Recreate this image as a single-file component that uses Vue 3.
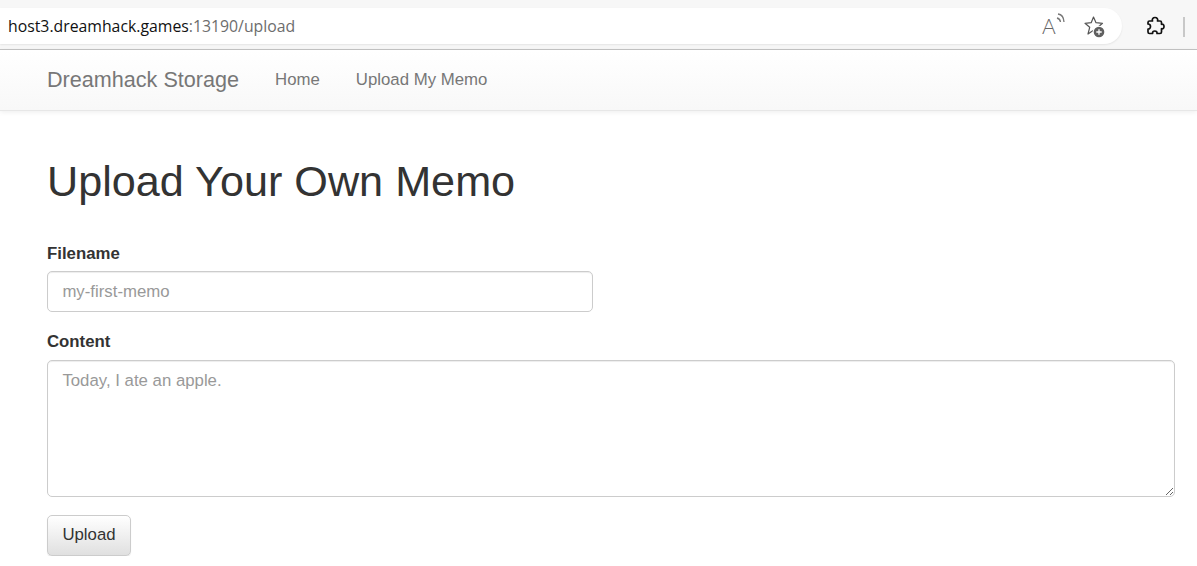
<script setup>
const links = ['Home', 'Upload My Memo']
</script>

<template>
  <div class="browser">
    <div class="urlbar">
      <div class="url"><span class="host">host3.dreamhack.games</span>:13190/upload</div>
      <div class="url-icons">
        <div class="read">
          <span class="read-a">A</span>
          <svg class="waves" width="10" height="12" viewBox="0 0 10 12" fill="none" stroke="#777" stroke-width="1.300">
            <path d="M1 5C3 5.500 4.200 7 4.500 9" />
            <path d="M2 1C5.500 1.500 7.800 4.500 8 9" />
          </svg>
        </div>
        <svg width="24" height="24" viewBox="0 0 24 24" fill="none">
          <path d="M10.500 3L13 8.700L19.500 9.300L14.900 13.300L16.300 19.300L10.500 16.200L5 20L6.700 13.300L2 9.300L8.200 8.700Z" stroke="#555" stroke-width="1.200" stroke-linejoin="round" />
          <circle cx="16" cy="18" r="6.300" fill="#fff" />
          <circle cx="16" cy="18" r="5.300" fill="#606060" />
          <path d="M16 15.300v5.400M13.300 18h5.400" stroke="#fff" stroke-width="1.300" />
        </svg>
      </div>
    </div>
    <svg class="puzzle" width="20" height="20" viewBox="0 0 20 20" fill="none">
      <path d="M7.500 5C6.800 3 8 1.500 10 1.500S13.200 3 12.500 5H15C16 5 16.500 5.500 16.500 6.500V8.300C18 7.800 19 9 19 10.500S18 13.200 16.500 12.700V16C16.500 17 16 17.500 15 17.500H12C12.300 16 11.300 15 9.800 15S7.300 16 7.600 17.500H4.500C3.500 17.500 3 17 3 16V13.200C4.500 13.200 5.500 12 5.500 10.500S4.500 8 3 8V6.500C3 5.500 3.500 5 4.500 5Z" stroke="#111" stroke-width="1.700" stroke-linejoin="round" />
    </svg>
    <div class="divider"></div>
  </div>

  <nav class="navbar">
    <a class="brand">Dreamhack Storage</a>
    <a v-for="link in links" :key="link" class="nav-link">{{ link }}</a>
  </nav>

  <main class="container">
    <h1>Upload Your Own Memo</h1>
    <form @submit.prevent>
      <label class="field-label first" for="filename">Filename</label>
      <input id="filename" class="control short" type="text" placeholder="my-first-memo" />
      <label class="field-label" for="content">Content</label>
      <textarea id="content" class="control area" placeholder="Today, I ate an apple."></textarea>
      <button class="btn">Upload</button>
    </form>
  </main>
</template>

<style>
html, body {
  background: #fff;
  overflow: hidden;
}
</style>

<style scoped>
.browser {
  height: 49px;
  box-sizing: content-box;
  display: flex;
  align-items: flex-start;
  background: #f7f7f7;
  border-bottom: 1px solid #c4c4c4;
}
.urlbar {
  width: 1122px;
  height: 36px;
  margin-top: 8px;
  padding-left: 8px;
  box-sizing: border-box;
  display: flex;
  align-items: center;
  justify-content: space-between;
  background: #fff;
  border-radius: 0 18px 18px 0;
  box-shadow: 0 1px 2px rgba(0, 0, 0, 0.08);
}
.url {
  font-family: "Open Sans", sans-serif;
  font-size: 15.8px;
  color: #6d6d6d;
}
.host {
  color: #111;
}
.url-icons {
  display: flex;
  align-items: center;
  gap: 19px;
  padding-right: 15px;
}
.read {
  position: relative;
  width: 22px;
  height: 24px;
}
.read-a {
  font-family: "Lato", sans-serif;
  font-weight: 300;
  font-size: 21px;
  line-height: 24px;
  color: #666;
}
.waves {
  position: absolute;
  top: -1px;
  right: -2px;
}
.puzzle {
  margin: 16px 0 0 23px;
}
.divider {
  width: 2px;
  height: 20px;
  margin: 17px 0 0 18px;
  background: #c8c8c8;
}
.navbar {
  height: 61px;
  padding-left: 47px;
  box-sizing: border-box;
  display: flex;
  align-items: center;
  font-family: "Liberation Sans", sans-serif;
  background: linear-gradient(to bottom, #fff, #f8f8f8);
  border-bottom: 1px solid #e7e7e7;
  box-shadow: 0 1px 5px rgba(0, 0, 0, 0.075);
}
.brand {
  font-size: 21.6px;
  color: #777;
  margin-right: 36px;
}
.nav-link {
  font-size: 16.8px;
  color: #777;
  margin-right: 36px;
}
.container {
  padding: 0 22px 0 47px;
  font-family: "Liberation Sans", sans-serif;
  color: #333;
}
h1 {
  margin: 44px 0 0;
  font-size: 43.2px;
  font-weight: 400;
  line-height: 52px;
}
form {
  display: flex;
  flex-direction: column;
  align-items: flex-start;
  margin-top: 37px;
}
.field-label {
  font-size: 16.8px;
  font-weight: 700;
  line-height: 20px;
  margin-bottom: 8px;
}
.field-label.first {
  margin-bottom: 7px;
}
.control {
  display: block;
  box-sizing: border-box;
  padding: 8px 14.4px;
  font-family: "Liberation Sans", sans-serif;
  font-size: 16.8px;
  line-height: 24px;
  color: #555;
  background: #fff;
  border: 1px solid #ccc;
  border-radius: 5px;
  box-shadow: inset 0 1px 1px rgba(0, 0, 0, 0.075);
  outline: none;
}
.control::placeholder {
  color: #999;
  opacity: 1;
}
.short {
  width: 546px;
  height: 41px;
  margin-bottom: 20px;
}
.area {
  width: 1128px;
  height: 137px;
  margin-bottom: 18px;
}
.btn {
  width: 84px;
  height: 41px;
  padding: 0 0 2px;
  font-family: "Liberation Sans", sans-serif;
  font-size: 16.8px;
  color: #333;
  background: linear-gradient(to bottom, #fff, #e0e0e0);
  border: 1px solid #ccc;
  border-radius: 5px;
  box-shadow: 0 1px 1px rgba(0, 0, 0, 0.1);
}
</style>
